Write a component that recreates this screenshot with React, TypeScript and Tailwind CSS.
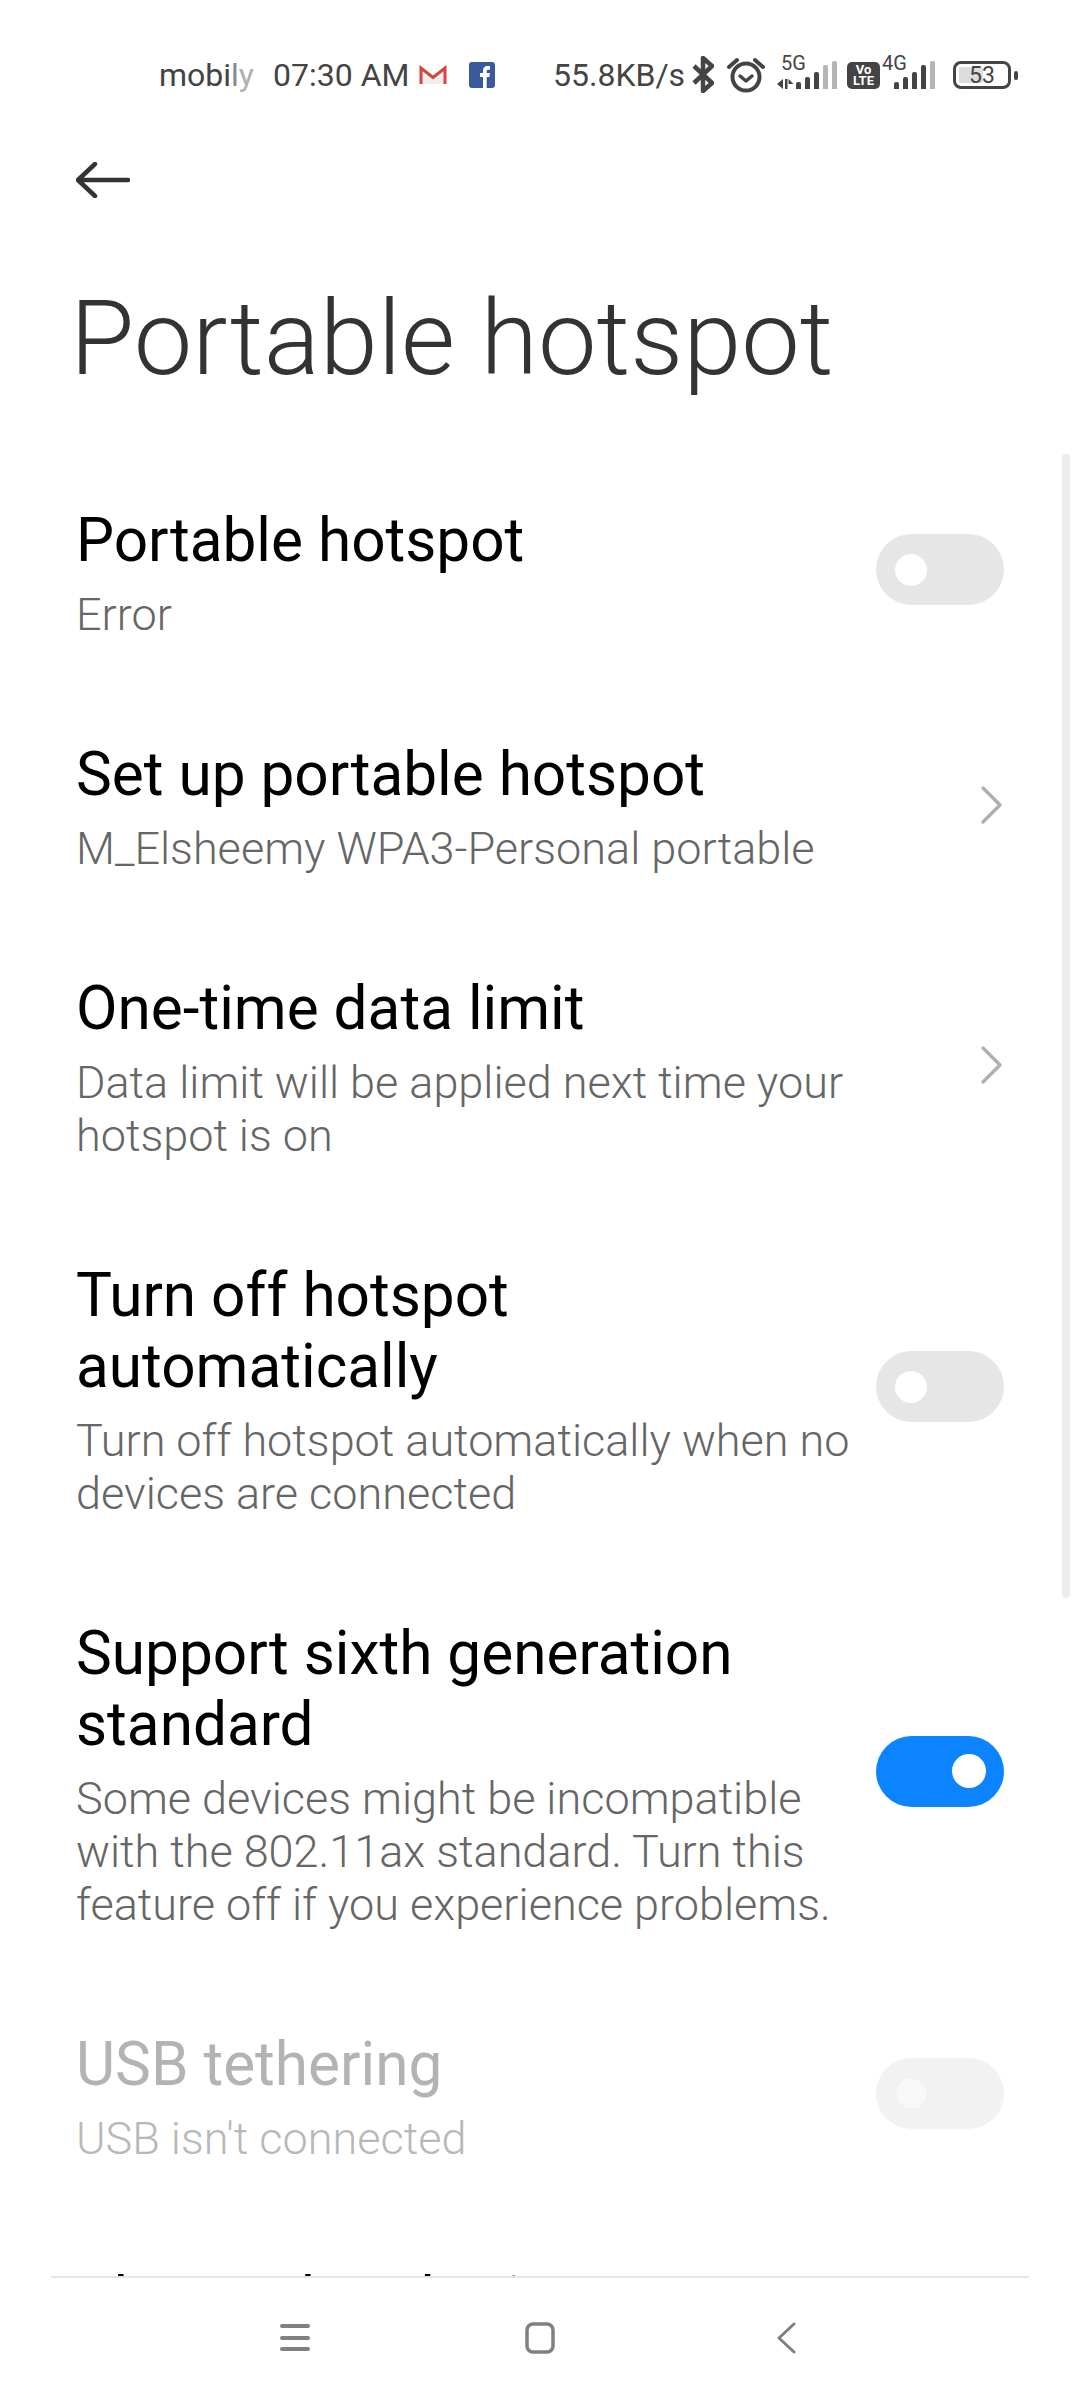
type Row = {
  title: string;
  sub?: string;
  control?: 'on' | 'off' | 'disabled' | 'chevron';
};

const rows: Row[] = [
  { title: 'Portable hotspot', sub: 'Error', control: 'off' },
  { title: 'Set up portable hotspot', sub: 'M_Elsheemy WPA3-Personal portable', control: 'chevron' },
  { title: 'One-time data limit', sub: 'Data limit will be applied next time your hotspot is on', control: 'chevron' },
  { title: 'Turn off hotspot automatically', sub: 'Turn off hotspot automatically when no devices are connected', control: 'off' },
  {
    title: 'Support sixth generation standard',
    sub: 'Some devices might be incompatible with the 802.11ax standard. Turn this feature off if you experience problems.',
    control: 'on',
  },
  { title: 'USB tethering', sub: "USB isn't connected", control: 'disabled' },
  { title: 'Bluetooth tethering' },
];

function Toggle({ state }: { state: 'on' | 'off' | 'disabled' }) {
  if (state === 'on') {
    return (
      <div className="mb-[7px] flex h-[71px] w-[128px] shrink-0 items-center justify-end rounded-full bg-[#0d84ff] pr-[18px]">
        <div className="h-[34px] w-[34px] rounded-full bg-white" />
      </div>
    );
  }
  if (state === 'disabled') {
    return (
      <div className="mb-[7px] flex h-[71px] w-[128px] shrink-0 items-center rounded-full bg-[#f2f2f2] pl-[19px]">
        <div className="h-[33px] w-[33px] rounded-full border border-[#efefef] bg-[#f8f8f8]" />
      </div>
    );
  }
  return (
    <div className="mb-[7px] flex h-[71px] w-[128px] shrink-0 items-center rounded-full bg-[#e6e6e6] pl-[19px]">
      <div className="h-[32px] w-[32px] rounded-full bg-white" />
    </div>
  );
}

function SignalBars({ bars, dark }: { bars: number[]; dark: number }) {
  return (
    <div className="flex h-[28px] items-end gap-[4px]">
      {bars.map((h, i) => (
        <div
          key={i}
          className={i < dark ? 'w-[5px] rounded-t-[2px] bg-[#444]' : 'w-[5px] rounded-t-[2px] bg-[#b5b5b5]'}
          style={{ height: h }}
        />
      ))}
    </div>
  );
}

function StatusBar() {
  return (
    <div className="flex h-[100px] items-center pl-[159px] pt-[50px] text-[#444]">
      <span className="w-[114px] text-[32px] leading-none">
        mobi<span className="text-[#888]">l</span>
        <span className="text-[#b0b0b0]">y</span>
      </span>
      <span className="w-[146px] whitespace-nowrap text-[32px] leading-none">07:30 AM</span>
      <svg width="28" height="20" viewBox="0 0 28 20">
        <path d="M1 19V2l13 10L27 2v17" fill="#eee" />
        <path d="M2 19V3l12 9.500L26 3v16" fill="none" stroke="#d0493c" strokeWidth="3" />
      </svg>
      <svg width="26" height="26" viewBox="0 0 26 26" className="ml-[22px]">
        <rect width="26" height="26" rx="3" fill="#3b5a9e" />
        <path d="M14 26V15h-3v-4h3V8.500C14 5.500 15.800 4 18.400 4H21v3.800h-1.700c-1.300 0-1.600.6-1.600 1.600V11h3.200l-.5 4h-2.700v11z" fill="#fff" />
      </svg>
      <span className="ml-[58px] w-[139px] whitespace-nowrap text-[32px] leading-none">55.8KB/s</span>
      <svg width="22" height="37" viewBox="0 0 22 37" fill="none" stroke="#444" strokeWidth="4.500" className="-mt-[1px]">
        <path d="M2 10l18 17-9 8V2l9 8L2 27" strokeLinejoin="round" />
      </svg>
      <svg width="38" height="36" viewBox="0 0 38 36" fill="none" stroke="#444" className="ml-[13px]">
        <circle cx="19" cy="20" r="13.500" strokeWidth="4" />
        <path d="M13 19l6 5 6-5" strokeWidth="3.500" strokeLinecap="round" strokeLinejoin="round" />
        <path d="M2 10l8-7M36 10l-8-7" strokeWidth="4" strokeLinecap="round" />
      </svg>
      <div className="relative ml-[12px] h-[28px] w-[63px]">
        <span className="absolute left-[4px] -top-[8px] text-[20px] leading-[20px]">5G</span>
        <svg width="17" height="10" viewBox="0 0 17 10" fill="#444" className="absolute left-0 bottom-0">
          <path d="M0 5l6-5v10zM8 0h2.500v10H8zM11.500 0l5 5h-5z" />
        </svg>
        <div className="absolute left-[19px] bottom-0">
          <SignalBars bars={[7, 12, 17, 24, 28]} dark={3} />
        </div>
      </div>
      <div className="ml-[7px] flex h-[27px] w-[33px] flex-col items-center justify-center rounded-[5px] bg-[#444] text-[13px] font-bold leading-[11px] text-white">
        <span>Vo</span>
        <span>LTE</span>
      </div>
      <div className="relative ml-[1px] h-[28px] w-[60px]">
        <span className="absolute left-[1px] -top-[8px] text-[20px] leading-[20px]">4G</span>
        <div className="absolute left-[13px] bottom-0">
          <SignalBars bars={[7, 12, 17, 24, 28]} dark={4} />
        </div>
      </div>
      <div className="relative ml-[12px] flex h-[28px] w-[58px] items-center rounded-[8px] border-[3.500px] border-[#444] p-[3px]">
        <div className="h-full w-[53%] rounded-[2px] bg-[#ddd]" />
        <span className="absolute inset-0 flex items-center justify-center text-[23px] leading-none">53</span>
      </div>
      <div className="ml-[3px] h-[9px] w-[4px] rounded-[2px] bg-[#444]" />
    </div>
  );
}

function SettingRow({ row }: { row: Row }) {
  const disabled = row.control === 'disabled';
  return (
    <div className="flex items-center justify-between py-[49px] pl-[76px] pr-[76px] last:pt-[50px]">
      <div className="min-w-0 flex-1 pr-[12px]">
        <div className={`max-w-[780px] text-[60.300px] leading-[71px] ${disabled ? 'text-[#b3b3b3]' : 'text-black'}`}>
          {row.title}
        </div>
        {row.sub && (
          <div className={`mt-[12px] text-[45px] font-light leading-[53px] ${disabled ? 'text-[#b8b8b8]' : 'text-[#666]'}`}>
            {row.sub}
          </div>
        )}
      </div>
      {row.control === 'chevron' && (
        <svg width="24" height="40" viewBox="0 0 24 40" fill="none" stroke="#b0b0b0" strokeWidth="3.500" strokeLinecap="round" strokeLinejoin="round" className="mb-[5px] mr-[1px]">
          <path d="M4 3l17 17L4 37" />
        </svg>
      )}
      {row.control && row.control !== 'chevron' && <Toggle state={row.control} />}
    </div>
  );
}

export default function App() {
  return (
    <div className="relative flex h-[2400px] w-[1080px] flex-col overflow-hidden bg-white font-[Roboto,sans-serif]">
      <StatusBar />

      <div className="pl-[76px] pt-[62px]">
        <svg width="54" height="36" viewBox="0 0 54 36" fill="none" stroke="#333" strokeWidth="4.500" strokeLinecap="round" strokeLinejoin="round">
          <path d="M52 18H2M19 2L2 18l17 16" />
        </svg>
      </div>

      <h1 className="ml-[70px] mt-[81px] text-[104.500px] font-light leading-[120px] text-[#333]">Portable hotspot</h1>

      <div className="mt-[57px] min-h-0 flex-1 overflow-hidden">
        {rows.map((row) => (
          <SettingRow key={row.title} row={row} />
        ))}
      </div>

      {/* scrollbar */}
      <div className="absolute left-[1062px] top-[454px] h-[1144px] w-[8px] rounded-full bg-[#ececec]" />

      <div className="mx-[51px] flex h-[124px] shrink-0 items-start justify-center gap-[215px] border-t-2 border-[#e6e6e6] pt-[44px]">
        <svg width="30" height="32" viewBox="0 0 30 32" fill="none" stroke="#808080" strokeWidth="4" strokeLinecap="round">
          <path d="M2 4h26M2 16h26M2 27h26" />
        </svg>
        <svg width="30" height="32" viewBox="0 0 30 32" fill="none" stroke="#808080" strokeWidth="3.500">
          <rect x="2" y="2" width="26" height="28" rx="6" />
        </svg>
        <svg width="30" height="32" viewBox="0 0 30 32" fill="none" stroke="#808080" strokeWidth="3" strokeLinecap="round" strokeLinejoin="round">
          <path d="M24 2L9 16l15 14" />
        </svg>
      </div>
    </div>
  );
}
